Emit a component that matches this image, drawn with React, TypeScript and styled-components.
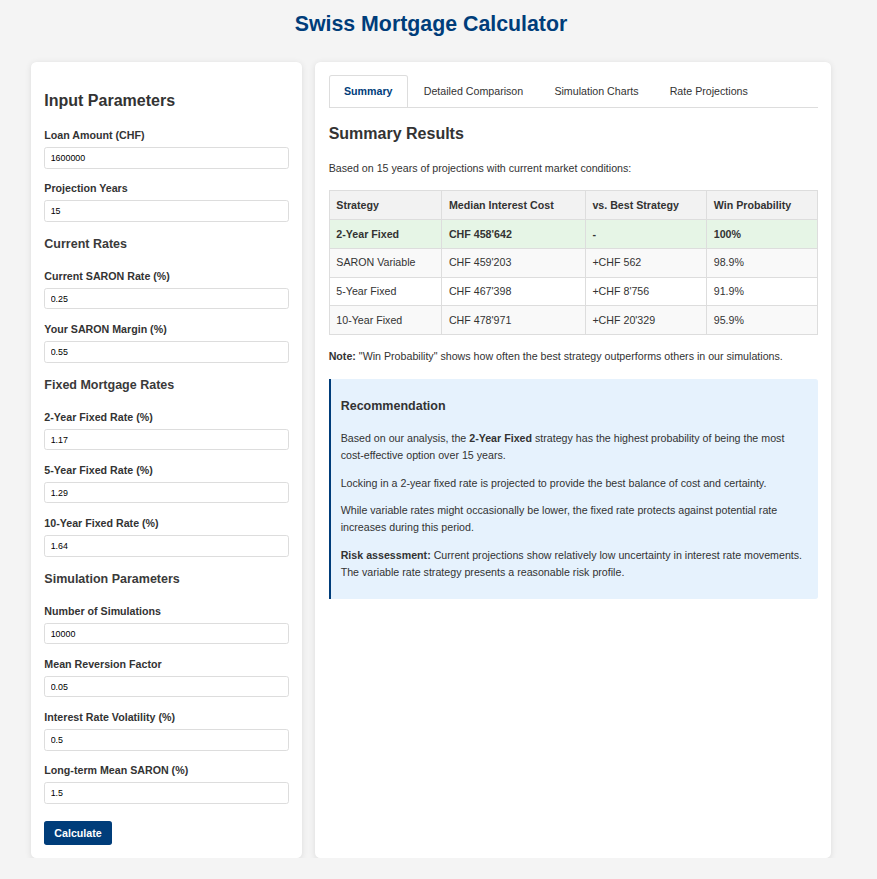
import React from "react";
import styled, { createGlobalStyle } from "styled-components";

const GlobalStyle = createGlobalStyle`
  * { box-sizing: border-box; }
  html, body { margin: 0; padding: 0; }
  body {
    background: #f4f4f4;
    color: #333;
    font-family: "Liberation Sans", Arial, sans-serif;
    font-size: 10.67px;
    line-height: 1.6;
    padding-right: 15px;
  }
`;

const Page = styled.div`
  max-width: 800px;
  margin: 0 auto;
`;

const Title = styled.h1`
  font-size: 21.33px;
  font-weight: bold;
  color: #003d7a;
  text-align: center;
  margin: 7px 0 21px;
`;

const Columns = styled.div`
  display: grid;
  grid-template-columns: 271px 1fr;
  gap: 13.33px;
  align-items: stretch;
`;

const Panel = styled.section`
  background: #fff;
  border-radius: 5.33px;
  padding: 13.33px;
  box-shadow: 0 1.33px 6px rgba(0, 0, 0, 0.1);
`;

const PanelTitle = styled.h2`
  font-size: 16px;
  font-weight: bold;
  margin: 13.33px 0;
  color: #333;
`;

const InputsTitle = styled(PanelTitle)`
  margin: 12.5px 0 13.33px;
`;

const SectionTitle = styled.h3`
  font-size: 12.5px;
  font-weight: bold;
  margin: 12.6px 0 13.4px;
  color: #3a3a3a;
`;

const FormGroup = styled.div`
  margin-bottom: 11.45px;
`;

const Label = styled.label`
  display: block;
  font-weight: bold;
  margin-bottom: 3.33px;
`;

const Input = styled.input`
  display: block;
  width: 100%;
  height: 21.33px;
  padding: 0 5.33px;
  border: 1px solid #ddd;
  border-radius: 2.67px;
  font-family: "Liberation Sans", Arial, sans-serif;
  font-size: 8.89px;
  color: #000;
  background: #fff;
`;

const Button = styled.button`
  display: block;
  margin-top: 17.33px;
  background: #003d7a;
  color: #fff;
  border: none;
  border-radius: 2.67px;
  padding: 5.67px 10px 5.83px;
  font-family: "Liberation Sans", Arial, sans-serif;
  font-size: 10.67px;
  font-weight: bold;
  line-height: normal;
  cursor: pointer;
`;

const TabBar = styled.div`
  display: flex;
  border-bottom: 1px solid #ddd;
`;

const Tab = styled.button<{ $active?: boolean }>`
  background: ${(p) => (p.$active ? "#fff" : "transparent")};
  border: 1px solid ${(p) => (p.$active ? "#ddd" : "transparent")};
  border-bottom: none;
  border-radius: 2.67px 2.67px 0 0;
  padding: 6.67px 14.83px 6.67px 14.33px;
  font-family: "Liberation Sans", Arial, sans-serif;
  font-size: 10.67px;
  line-height: 1.6;
  font-weight: ${(p) => (p.$active ? "bold" : "normal")};
  color: ${(p) => (p.$active ? "#003d7a" : "#333")};
  cursor: pointer;
`;

const Paragraph = styled.p`
  margin: 10.67px 0;
`;

const Table = styled.table`
  width: 100%;
  border-collapse: collapse;
  margin: 13.33px 0;
`;

const Th = styled.th`
  background: #f2f2f2;
  border: 1px solid #ddd;
  padding: 5.33px 6.67px;
  text-align: left;
  font-weight: bold;
`;

const Row = styled.tr<{ $best?: boolean }>`
  background: ${(p) => (p.$best ? "#e6f5e6" : "#fff")};
  font-weight: ${(p) => (p.$best ? "bold" : "normal")};
  &:nth-child(even) {
    background: #f9f9f9;
  }
`;

const Td = styled.td`
  border: 1px solid #ddd;
  padding: 5.33px 6.67px;
  text-align: left;
`;

const Recommendation = styled.div`
  margin-top: 13.33px;
  background: #e6f2fd;
  border-left: 2.67px solid #003d7a;
  border-radius: 0 2.67px 2.67px 0;
  padding: 10px 10px 7px;
`;

const RecTitle = styled.h3`
  font-size: 12.5px;
  font-weight: bold;
  margin: 7.67px 0 13.33px;
  color: #333;
`;

const rows = [
  { s: "2-Year Fixed", c: "CHF 458'642", v: "-", w: "100%", best: true },
  { s: "SARON Variable", c: "CHF 459'203", v: "+CHF 562", w: "98.9%" },
  { s: "5-Year Fixed", c: "CHF 467'398", v: "+CHF 8'756", w: "91.9%" },
  { s: "10-Year Fixed", c: "CHF 478'971", v: "+CHF 20'329", w: "95.9%" },
];

const fields: Array<{ section?: string; label: string; value: string }> = [
  { label: "Loan Amount (CHF)", value: "1600000" },
  { label: "Projection Years", value: "15" },
  { section: "Current Rates", label: "Current SARON Rate (%)", value: "0.25" },
  { label: "Your SARON Margin (%)", value: "0.55" },
  { section: "Fixed Mortgage Rates", label: "2-Year Fixed Rate (%)", value: "1.17" },
  { label: "5-Year Fixed Rate (%)", value: "1.29" },
  { label: "10-Year Fixed Rate (%)", value: "1.64" },
  { section: "Simulation Parameters", label: "Number of Simulations", value: "10000" },
  { label: "Mean Reversion Factor", value: "0.05" },
  { label: "Interest Rate Volatility (%)", value: "0.5" },
  { label: "Long-term Mean SARON (%)", value: "1.5" },
];

export default function App() {
  return (
    <>
      <GlobalStyle />
      <Page>
        <Title>Swiss Mortgage Calculator</Title>
        <Columns>
          <Panel>
            <InputsTitle>Input Parameters</InputsTitle>
            {fields.map((f) => (
              <React.Fragment key={f.label}>
                {f.section && <SectionTitle>{f.section}</SectionTitle>}
                <FormGroup>
                  <Label>{f.label}</Label>
                  <Input type="text" defaultValue={f.value} />
                </FormGroup>
              </React.Fragment>
            ))}
            <Button>Calculate</Button>
          </Panel>
          <Panel>
            <TabBar>
              <Tab $active>Summary</Tab>
              <Tab>Detailed Comparison</Tab>
              <Tab>Simulation Charts</Tab>
              <Tab>Rate Projections</Tab>
            </TabBar>
            <PanelTitle>Summary Results</PanelTitle>
            <Paragraph>Based on 15 years of projections with current market conditions:</Paragraph>
            <Table>
              <thead>
                <tr>
                  <Th>Strategy</Th>
                  <Th>Median Interest Cost</Th>
                  <Th>vs. Best Strategy</Th>
                  <Th>Win Probability</Th>
                </tr>
              </thead>
              <tbody>
                {rows.map((r) => (
                  <Row key={r.s} $best={r.best}>
                    <Td>{r.s}</Td>
                    <Td>{r.c}</Td>
                    <Td>{r.v}</Td>
                    <Td>{r.w}</Td>
                  </Row>
                ))}
              </tbody>
            </Table>
            <Paragraph>
              <strong>Note:</strong> "Win Probability" shows how often the best strategy outperforms others in our simulations.
            </Paragraph>
            <Recommendation>
              <RecTitle>Recommendation</RecTitle>
              <Paragraph>
                Based on our analysis, the <strong>2-Year Fixed</strong> strategy has the highest probability of being the most cost-effective option over 15 years.
              </Paragraph>
              <Paragraph>Locking in a 2-year fixed rate is projected to provide the best balance of cost and certainty.</Paragraph>
              <Paragraph>
                While variable rates might occasionally be lower, the fixed rate protects against potential rate increases during this period.
              </Paragraph>
              <Paragraph>
                <strong>Risk assessment:</strong> Current projections show relatively low uncertainty in interest rate movements. The variable rate strategy presents a reasonable risk profile.
              </Paragraph>
            </Recommendation>
          </Panel>
        </Columns>
      </Page>
    </>
  );
}
